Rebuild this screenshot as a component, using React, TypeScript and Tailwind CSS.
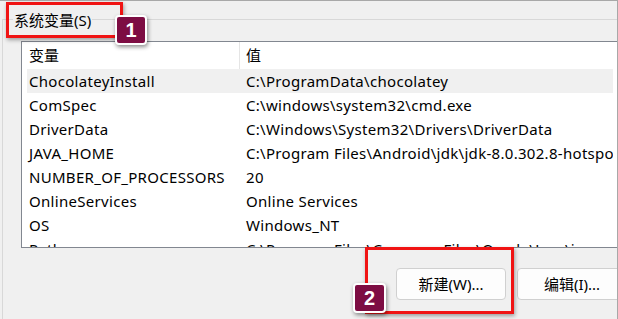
import React from "react";

const rows: [string, string][] = [
  ["ChocolateyInstall", "C:\\ProgramData\\chocolatey"],
  ["ComSpec", "C:\\windows\\system32\\cmd.exe"],
  ["DriverData", "C:\\Windows\\System32\\Drivers\\DriverData"],
  ["JAVA_HOME", "C:\\Program Files\\Android\\jdk\\jdk-8.0.302.8-hotspot\\jdk8u302-b08"],
  ["NUMBER_OF_PROCESSORS", "20"],
  ["OnlineServices", "Online Services"],
  ["OS", "Windows_NT"],
  ["Path", "C:\\Program Files\\Common Files\\Oracle\\Java\\javapath;C:\\windows"],
];

function Badge({ n, className }: { n: string; className: string }) {
  return (
    <div
      className={
        "absolute flex items-center justify-center bg-[#7d0d43] border-2 border-white rounded-[4px] text-white font-bold text-[20px] leading-none shadow-[1px_2px_4px_rgba(0,0,0,0.45)] font-['Liberation_Sans',sans-serif] " +
        className
      }
    >
      {n}
    </div>
  );
}

export default function App() {
  return (
    <div className="relative w-[618px] h-[319px] overflow-hidden bg-[#f0f0f0] border-t border-r border-[#a8a8a8] text-black font-['Noto_Sans','Noto_Sans_CJK_SC',sans-serif]">
      <div className="relative ml-[2px] mt-[18px] h-[400px] border-t border-l border-[#d8d8d8]">
        <div className="absolute left-[10px] top-[-10px] px-[1px] bg-[#f0f0f0] text-[15px] leading-[20px] whitespace-nowrap">
          系统变量(S)
        </div>
        <div className="ml-[18px] mt-[21px] w-[598px] h-[207px] border border-[#828790] bg-white overflow-hidden">
          <div className="flex h-[27px] items-center text-[15px] whitespace-nowrap">
            <div className="w-[218px] h-full flex items-center pl-[7px] border-r border-[#e5e5e5]">变量</div>
            <div className="pl-[6px]">值</div>
          </div>
          {rows.map(([k, v], i) => (
            <div
              key={k}
              className={
                "flex h-[24px] items-center mx-[5px] text-[15px] tracking-[0.3px] whitespace-nowrap overflow-hidden " +
                (i === 0 ? "bg-[#f0f0f0]" : "")
              }
            >
              <div className="w-[212px] shrink-0 pl-[2px]">{k}</div>
              <div className="pl-[7px]">{v}</div>
            </div>
          ))}
        </div>
        <div className="flex ml-[393px] mt-[20px] gap-[11px]">
          <button className="shrink-0 w-[110px] h-[32px] rounded-[4px] border border-[#d0d0d0] bg-[#fdfdfd] text-[15px] flex items-center justify-center">
            新建(W)...
          </button>
          <button className="shrink-0 w-[110px] h-[32px] rounded-[4px] border border-[#d0d0d0] bg-[#fdfdfd] text-[15px] flex items-center justify-center">
            编辑(I)...
          </button>
        </div>
      </div>

      <div className="absolute left-[6px] top-[1px] w-[117px] h-[36px] border-[3px] border-[#f01414] shadow-[1px_2px_4px_rgba(0,0,0,0.35)]" />
      <Badge n="1" className="left-[115px] top-[14px] w-[32px] h-[30px]" />

      <div className="absolute left-[365px] top-[246px] w-[149px] h-[67px] border-[3px] border-[#f01414] shadow-[1px_2px_4px_rgba(0,0,0,0.35)]" />
      <Badge n="2" className="left-[353px] top-[282px] w-[33px] h-[30px]" />
    </div>
  );
}
